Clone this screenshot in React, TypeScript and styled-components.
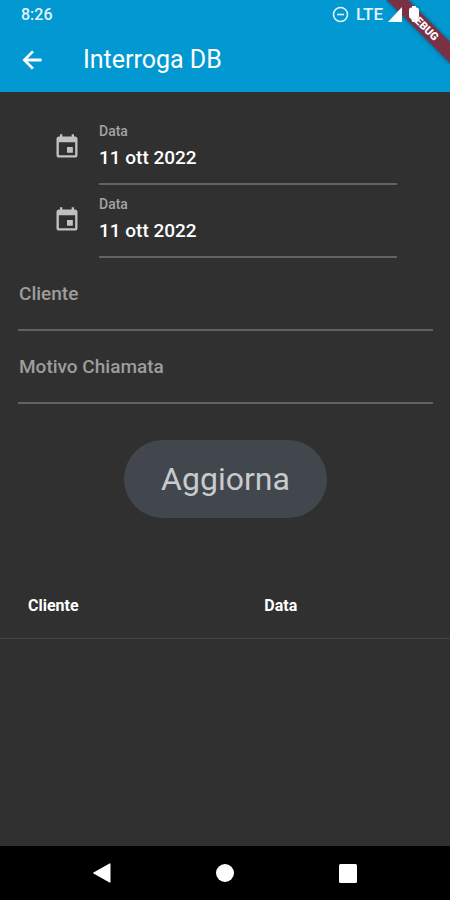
import React from "react";
import styled, { createGlobalStyle } from "styled-components";

const GlobalStyle = createGlobalStyle`
  *, *::before, *::after { box-sizing: border-box; }
  body {
    margin: 0;
    background: #303030;
    font-family: Roboto, "Noto Sans", sans-serif;
  }
`;

const Screen = styled.div`
  position: relative;
  display: flex;
  flex-direction: column;
  min-height: 100vh;
  background: #303030;
  color: #fff;
`;

const Header = styled.header`
  padding-bottom: 2px;
  background: #0299d3;
`;

const StatusBar = styled.div`
  display: flex;
  align-items: center;
  justify-content: space-between;
  height: 30px;
  padding: 0 30px 0 21px;
  font-size: 16px;
  font-weight: 500;
  line-height: 30px;
  color: #e3f4fb;
`;

const StatusIcons = styled.div`
  display: flex;
  align-items: center;
  height: 28px;
  margin-bottom: 2px;
  line-height: 28px;
  gap: 7px;
`;

const Network = styled.span`
  font-size: 17px;
`;

const SignalGroup = styled.div`
  position: relative;
  z-index: 2;
  display: flex;
  align-items: center;
  gap: 6px;
  margin-left: -2px;
  color: #fff;
`;

const Toolbar = styled.div`
  display: flex;
  align-items: center;
  gap: 37px;
  height: 60px;
  padding: 0 18px;
`;

const IconButton = styled.button`
  display: grid;
  place-items: center;
  padding: 0;
  border: 0;
  background: none;
  color: inherit;
  cursor: pointer;
`;

const Title = styled.h1`
  margin: 0;
  font-size: 25px;
  font-weight: 400;
  line-height: 32px;
`;

const BannerCorner = styled.div`
  position: absolute;
  top: 0;
  right: 0;
  z-index: 1;
  width: 64px;
  height: 64px;
  overflow: hidden;
  pointer-events: none;
`;

const Banner = styled.div`
  position: absolute;
  top: 19px;
  right: -24px;
  width: 100px;
  height: 15px;
  background: #7a3045;
  box-shadow: 0 0 5px rgba(0, 0, 0, 0.4);
  font-size: 11px;
  font-weight: 900;
  line-height: 15px;
  text-align: center;
  transform: rotate(45deg);
`;

const Main = styled.main`
  flex: 1;
`;

const Form = styled.form`
  display: flex;
  flex-direction: column;
  padding: 20px 17px 0 18px;
`;

const DateRow = styled.div`
  display: flex;
  gap: 18px;
  padding: 0 36px 0 35px;
  color: #c1c1c1;

  svg {
    flex: none;
    margin-top: 21px;
  }
`;

const DateField = styled.div`
  flex: 1;
  min-width: 0;
  display: flex;
  flex-direction: column;
  height: 73px;
  padding-top: 11px;
  border-bottom: 2px solid #626262;
`;

const DateLabel = styled.label`
  font-size: 14px;
  font-weight: 500;
  line-height: 16px;
  color: #a3a3a3;
`;

const DateInput = styled.input`
  width: 100%;
  height: 24px;
  margin-top: 7px;
  padding: 0;
  border: 0;
  outline: 0;
  background: none;
  color: #fff;
  font: 500 19px/24px Roboto, "Noto Sans", sans-serif;
`;

const TextField = styled.div`
  display: grid;
  height: 73px;
  padding: 21px 0 20px 1px;
  border-bottom: 2px solid #626262;
`;

const TextLabel = styled.label`
  grid-area: 1 / 1;
  align-self: center;
  font-size: 19px;
  font-weight: 500;
  line-height: 30px;
  color: #9d9d9d;
`;

const TextInput = styled.input`
  grid-area: 1 / 1;
  width: 100%;
  padding: 0;
  border: 0;
  outline: 0;
  background: none;
  color: #fff;
  font: 500 19px/30px Roboto, "Noto Sans", sans-serif;

  &:focus + label,
  &:not(:placeholder-shown) + label {
    visibility: hidden;
  }
`;

const SubmitButton = styled.button`
  align-self: center;
  height: 78px;
  margin-top: 36px;
  padding: 0 37px;
  border: 0;
  border-radius: 39px;
  background: #41474d;
  color: #c8cbcd;
  font: 400 32px/40px Roboto, "Noto Sans", sans-serif;
  cursor: pointer;
`;

const Results = styled.table`
  width: 100%;
  margin-top: 56px;
  border-collapse: collapse;
  table-layout: fixed;
`;

const HeadCell = styled.th<{ $share: string }>`
  width: ${({ $share }) => $share};
  height: 64px;
  padding: 0 0 0 28px;
  border-bottom: 1px solid #434343;
  text-align: left;
  font-size: 16px;
  font-weight: 700;
  line-height: 24px;
`;

const NavBar = styled.nav`
  display: grid;
  grid-template-columns: repeat(3, 1fr);
  height: 54px;
  padding: 0 41px;
  background: #000;
`;

const CalendarIcon = () => (
  <svg width="28" height="28" viewBox="0 0 24 24" fill="currentColor" aria-hidden="true">
    <path d="M17 12h-5v5h5v-5zM16 1v2H8V1H6v2H5c-1.11 0-1.99.9-1.99 2L3 19c0 1.1.89 2 2 2h14c1.1 0 2-.9 2-2V5c0-1.1-.9-2-2-2h-1V1h-2zm3 18H5V8h14v11z" />
  </svg>
);

const DateEntry = ({ id }: { id: string }) => (
  <DateRow>
    <CalendarIcon />
    <DateField>
      <DateLabel htmlFor={id}>Data</DateLabel>
      <DateInput id={id} type="text" defaultValue="11 ott 2022" />
    </DateField>
  </DateRow>
);

const TextEntry = ({ id, label }: { id: string; label: string }) => (
  <TextField>
    <TextInput id={id} type="text" placeholder=" " />
    <TextLabel htmlFor={id}>{label}</TextLabel>
  </TextField>
);

export default function App() {
  return (
    <Screen>
      <GlobalStyle />
      <Header>
        <StatusBar>
          <span>8:26</span>
          <StatusIcons>
            <svg width="17" height="17" viewBox="0 0 17 17" fill="none" stroke="currentColor" strokeWidth="1.6" aria-hidden="true">
              <circle cx="8.5" cy="8.5" r="7" />
              <path d="M5 8.500h7" />
            </svg>
            <Network>LTE</Network>
            <SignalGroup>
              <svg width="14" height="15" viewBox="0 0 14 15" fill="currentColor" aria-hidden="true">
                <path d="M14 0v15H0z" />
              </svg>
              <svg width="12" height="16" viewBox="0 0 12 16" fill="currentColor" aria-hidden="true">
                <path d="M4 0h4v1.500h.5Q11 1.500 11 4v6Q11 12 9.500 13v1.500L8 16H5Q3.500 16 3.500 13 1 12 1 10V4Q1 1.500 3.500 1.500H4z" />
              </svg>
            </SignalGroup>
          </StatusIcons>
        </StatusBar>
        <Toolbar>
          <IconButton type="button" aria-label="Indietro">
            <svg width="28" height="28" viewBox="0 0 24 24" fill="currentColor" stroke="currentColor" strokeWidth="0.4" aria-hidden="true">
              <path d="M20 11H7.83l5.590-5.590L12 4l-8 8 8 8 1.410-1.410L7.830 13H20v-2z" />
            </svg>
          </IconButton>
          <Title>Interroga DB</Title>
        </Toolbar>
      </Header>

      <BannerCorner>
        <Banner>DEBUG</Banner>
      </BannerCorner>

      <Main>
        <Form onSubmit={(e) => e.preventDefault()}>
          <DateEntry id="data-inizio" />
          <DateEntry id="data-fine" />
          <TextEntry id="cliente" label="Cliente" />
          <TextEntry id="motivo" label="Motivo Chiamata" />
          <SubmitButton type="submit">Aggiorna</SubmitButton>
        </Form>
        <Results>
          <thead>
            <tr>
              <HeadCell scope="col" $share="52.5%">Cliente</HeadCell>
              <HeadCell scope="col" $share="47.5%">Data</HeadCell>
            </tr>
          </thead>
        </Results>
      </Main>

      <NavBar>
        <IconButton type="button" aria-label="Indietro">
          <svg width="20" height="20" viewBox="0 0 20 20" fill="#fff" aria-hidden="true">
            <path d="M18.500 1v18q0 1-1 .5L1.500 10.500q-1-.5 0-1L17.500.5q1-.5 1 .5z" />
          </svg>
        </IconButton>
        <IconButton type="button" aria-label="Home">
          <svg width="18" height="18" viewBox="0 0 18 18" fill="#fff" aria-hidden="true">
            <circle cx="9" cy="9" r="9" />
          </svg>
        </IconButton>
        <IconButton type="button" aria-label="Recenti">
          <svg width="18" height="19" viewBox="0 0 18 19" fill="#fff" aria-hidden="true">
            <rect width="18" height="19" rx="1.500" />
          </svg>
        </IconButton>
      </NavBar>
    </Screen>
  );
}
